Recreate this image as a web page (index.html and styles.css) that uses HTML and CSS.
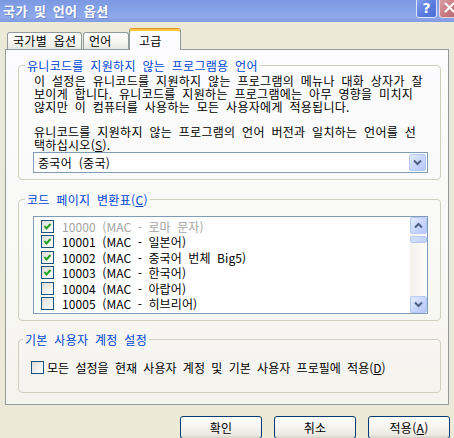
FILE: index.html
```html
<!DOCTYPE html>
<html lang="ko">
<head>
<meta charset="utf-8">
<title>국가 및 언어 옵션</title>
<link rel="stylesheet" href="styles.css">
</head>
<body>
<div class="window">
  <div class="titlebar">
    <span class="title">국가 및 언어 옵션</span>
    <div class="tb-buttons">
      <span class="tb-btn help">?</span>
      <span class="tb-btn close"><svg width="11" height="11" viewBox="0 0 11 11"><path d="M1.5 1.5 L9.5 9.5 M9.5 1.5 L1.5 9.5" stroke="#fff" stroke-width="2" stroke-linecap="round"/></svg></span>
    </div>
  </div>

  <div class="tabs">
    <div class="tab tab-region">국가별 옵션</div>
    <div class="tab tab-lang">언어</div>
    <div class="tab tab-adv active">고급</div>
  </div>

  <div class="panel">
    <fieldset class="group g-lang">
      <legend>유니코드를 지원하지 않는 프로그램용 언어</legend>
      <p class="desc"><span class="line">이 설정은 유니코드를 지원하지 않는 프로그램의 메뉴나 대화 상자가 잘</span><span class="line">보이게 합니다. 유니코드를 지원하는 프로그램에는 아무 영향을 미치지</span><span class="line">않지만 이 컴퓨터를 사용하는 모든 사용자에게 적용됩니다.</span></p>
      <p class="desc desc2"><span class="line">유니코드를 지원하지 않는 프로그램의 언어 버전과 일치하는 언어를 선</span><span class="line">택하십시오(<u>S</u>).</span></p>
      <div class="combo">
        <span class="combo-text">중국어 (중국)</span>
        <span class="sb-btn drop"><svg width="9" height="7" viewBox="0 0 9 7"><polyline points="1,1.5 4.5,5 8,1.5" fill="none" stroke="#4d6185" stroke-width="2"/></svg></span>
      </div>
    </fieldset>

    <fieldset class="group g-code">
      <legend>코드 페이지 변환표(<u>C</u>)</legend>
      <div class="listbox">
        <div class="items">
          <div class="item disabled"><span class="cb checked"><svg width="11" height="11" viewBox="0 0 11 11"><polyline points="2.5,5 4.5,7.5 8.5,3" fill="none" stroke="#21a121" stroke-width="2"/></svg></span><span>10000 (MAC - 로마 문자)</span></div>
          <div class="item"><span class="cb checked"><svg width="11" height="11" viewBox="0 0 11 11"><polyline points="2.5,5 4.5,7.5 8.5,3" fill="none" stroke="#21a121" stroke-width="2"/></svg></span><span>10001 (MAC - 일본어)</span></div>
          <div class="item"><span class="cb checked"><svg width="11" height="11" viewBox="0 0 11 11"><polyline points="2.5,5 4.5,7.5 8.5,3" fill="none" stroke="#21a121" stroke-width="2"/></svg></span><span>10002 (MAC - 중국어 번체 Big5)</span></div>
          <div class="item"><span class="cb checked"><svg width="11" height="11" viewBox="0 0 11 11"><polyline points="2.5,5 4.5,7.5 8.5,3" fill="none" stroke="#21a121" stroke-width="2"/></svg></span><span>10003 (MAC - 한국어)</span></div>
          <div class="item"><span class="cb"></span><span>10004 (MAC - 아랍어)</span></div>
          <div class="item"><span class="cb"></span><span>10005 (MAC - 히브리어)</span></div>
        </div>
        <div class="scrollbar">
          <span class="sb-btn"><svg width="9" height="7" viewBox="0 0 9 7"><polyline points="1,5.5 4.5,2 8,5.5" fill="none" stroke="#4d6185" stroke-width="2"/></svg></span>
          <span class="sb-thumb"></span>
          <span class="sb-space"></span>
          <span class="sb-btn"><svg width="9" height="7" viewBox="0 0 9 7"><polyline points="1,1.5 4.5,5 8,1.5" fill="none" stroke="#4d6185" stroke-width="2"/></svg></span>
        </div>
      </div>
    </fieldset>

    <fieldset class="group g-default">
      <legend>기본 사용자 계정 설정</legend>
      <div class="check-row"><span class="cb"></span><span>모든 설정을 현재 사용자 계정 및 기본 사용자 프로필에 적용(<u>D</u>)</span></div>
    </fieldset>
  </div>

  <div class="buttons">
    <button class="btn">확인</button>
    <button class="btn">취소</button>
    <button class="btn">적용(<u>A</u>)</button>
  </div>
</div>
</body>
</html>
```

FILE: styles.css
```css
html, body {
  margin: 0;
  padding: 0;
}

body {
  width: 454px;
  height: 438px;
  overflow: hidden;
  background: #ece9d8;
  font-family: "Noto Sans CJK KR", "Noto Sans", sans-serif;
  font-size: 12px;
  letter-spacing: 0.3px;
  word-spacing: 3px;
  color: #000;
}

.window {
  width: 454px;
  height: 438px;
}

/* ---------- title bar ---------- */
.titlebar {
  height: 22px;
  display: flex;
  align-items: center;
  padding-left: 3px;
  overflow: hidden;
  background: linear-gradient(to bottom, #7b98e2 0%, #86a2e8 45%, #8fa9ea 75%, #7f9be2 100%);
}

.title {
  flex: 1;
  color: #fff;
  font-size: 13px;
  font-weight: bold;
  letter-spacing: 0.5px;
  word-spacing: 2px;
  text-shadow: 1px 1px 0 #7088cc;
  line-height: 16px;
}

.tb-buttons {
  display: flex;
  gap: 2px;
  align-self: flex-start;
  margin-top: -3px;
  margin-right: -6px;
}

.tb-btn {
  box-sizing: border-box;
  width: 21px;
  height: 21px;
  border: 1px solid #dfe6fa;
  border-radius: 3px;
  display: flex;
  align-items: center;
  justify-content: center;
}

.help {
  background: linear-gradient(135deg, #86a3ee 0%, #5b7ddc 55%, #4b6ed4 100%);
  color: #fff;
  font-family: "DejaVu Sans", sans-serif;
  font-size: 14px;
  font-weight: bold;
  letter-spacing: 0;
}

.close {
  background: linear-gradient(135deg, #dba2a8 0%, #c6767e 60%, #b9666f 100%);
  border-color: #ecd2d6;
}

/* ---------- tabs ---------- */
.tabs {
  position: relative;
  z-index: 1;
  display: flex;
  align-items: flex-end;
  height: 22px;
  margin: 6px 0 -1px 7px;
}

.tab {
  box-sizing: border-box;
  height: 17px;
  margin-bottom: 1px;
  border: 1px solid #919b9c;
  border-bottom: none;
  border-radius: 3px 3px 0 0;
  background: linear-gradient(to bottom, #ffffff 0%, #f3f3ef 60%, #e8e7e1 100%);
  line-height: 15px;
  white-space: nowrap;
}

.tab-region {
  width: 75px;
  padding-left: 5px;
  margin-right: 1px;
}

.tab-lang {
  width: 46px;
  padding-left: 5px;
}

.tab-adv {
  width: 52px;
  padding-left: 9px;
}

.tab.active {
  height: 22px;
  margin-bottom: 0;
  border-top-color: #e68b2c;
  background: #fcfcfe;
  box-shadow: inset 0 2px 0 #ffc73c;
  line-height: 24px;
}

/* ---------- panel ---------- */
.panel {
  box-sizing: border-box;
  height: 356px;
  margin: 0 5px;
  padding: 9px 7px 0 12px;
  border: 1px solid #919b9c;
  background: linear-gradient(to bottom, #fcfcfe 0%, #f8f8f6 60%, #f4f3ee 100%);
}

.group {
  margin: 0;
  min-width: 0;
  border: 1px solid #d0d0bf;
  border-radius: 4px;
  padding: 2px 12px 6px 14px;
}

.group legend {
  color: #0046d5;
  padding: 0 2px;
  margin-left: -8px;
  line-height: 13px;
}

.desc {
  margin: 0 0 0 1px;
  white-space: nowrap;
}

.desc .line {
  display: block;
  height: 13px;
  line-height: 13px;
}

.desc2 {
  margin-top: 12px;
}

.combo {
  box-sizing: border-box;
  height: 21px;
  margin-top: 1px;
  border: 1px solid #7f9db9;
  background: #fff;
  display: flex;
  align-items: center;
  padding: 0 0 0 4px;
}

.combo-text {
  flex: 1;
}

/* ---------- list box ---------- */
.g-code {
  margin-top: 13px;
  padding-top: 10px;
  padding-bottom: 6px;
}

.listbox {
  box-sizing: border-box;
  height: 98px;
  border: 1px solid #7f9db9;
  background: #fff;
  display: flex;
}

.items {
  flex: 1;
  overflow: hidden;
  padding: 1.5px 0 0 7px;
}

.item {
  height: 15.5px;
  display: flex;
  align-items: center;
  gap: 8px;
  white-space: nowrap;
  letter-spacing: 0.1px;
}

.item.disabled {
  color: #a4a4a4;
}

.cb {
  box-sizing: border-box;
  flex: none;
  width: 13px;
  height: 13px;
  border: 1px solid #1c5180;
  background: linear-gradient(135deg, #dcdcd7 0%, #f0f0ec 55%, #ffffff 100%);
  display: flex;
  align-items: center;
  justify-content: center;
}

.scrollbar {
  width: 17px;
  display: flex;
  flex-direction: column;
  background: linear-gradient(to right, #f3f1ec, #fefefb);
}

.sb-btn {
  box-sizing: border-box;
  flex: none;
  width: 17px;
  height: 17px;
  border: 1px solid #b7c9f3;
  border-radius: 2px;
  background: linear-gradient(135deg, #e3ebfe 0%, #c6d6fc 55%, #b4c8f6 100%);
  display: flex;
  align-items: center;
  justify-content: center;
}

.combo .sb-btn {
  height: 17px;
  margin: 1px;
}

.sb-thumb {
  box-sizing: border-box;
  height: 7px;
  margin-top: 2px;
  border: 1px solid #b7c9f3;
  border-radius: 2px;
  background: linear-gradient(to right, #d2defc, #c3d3fc);
}

.sb-space {
  flex: 1;
}

/* ---------- default user group ---------- */
.g-default {
  margin-top: 12px;
  padding: 13px 12px 17px 12px;
}

.check-row {
  height: 16px;
  display: flex;
  align-items: center;
  gap: 3px;
  white-space: nowrap;
  letter-spacing: 0;
}

/* ---------- buttons ---------- */
.buttons {
  display: flex;
  justify-content: flex-end;
  gap: 12px;
  margin-top: 11px;
  padding-right: 4px;
}

.btn {
  box-sizing: border-box;
  width: 82px;
  height: 23px;
  border: 1px solid #003c74;
  border-radius: 3px;
  background: linear-gradient(to bottom, #ffffff 0%, #f5f4f0 45%, #ebe9e2 85%, #d8d3c8 100%);
  font-family: "Noto Sans CJK KR", "Noto Sans", sans-serif;
  font-size: 12px;
  letter-spacing: 0.3px;
  word-spacing: 3px;
  color: #000;
  padding: 0;
}
```
